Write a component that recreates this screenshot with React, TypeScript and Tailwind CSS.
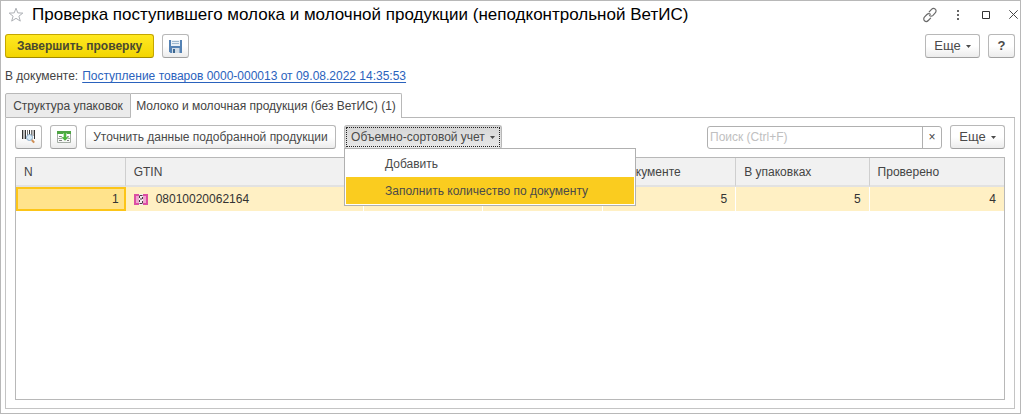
import React from 'react';

interface ToolButtonProps extends React.ButtonHTMLAttributes<HTMLButtonElement> {
  pressed?: boolean;
}

const ToolButton: React.FC<ToolButtonProps> = ({ className = '', pressed = false, children, ...rest }) => (
  <button
    type="button"
    className={`flex h-6 shrink-0 items-center justify-center rounded-[3px] border border-[#b8b8b8] border-b-[#a0a0a0] whitespace-nowrap text-[#4a4a4a] ${
      pressed
        ? 'bg-linear-to-b from-[#d6d6d6] to-[#e8e8e8] outline-1 outline-dotted -outline-offset-3 outline-[#222]'
        : 'bg-linear-to-b from-white from-50% to-[#ececec]'
    } ${className}`}
    {...rest}
  >
    {children}
  </button>
);

const Caret: React.FC = () => (
  <svg className="mt-px ml-[5px] h-[3px] w-[5px]" viewBox="0 0 5 3" fill="#4a4a4a" aria-hidden="true">
    <path d="M0 0h5L2.500 3z" />
  </svg>
);

const StarIcon: React.FC = () => (
  <svg className="h-4 w-4" viewBox="0 0 16 16" fill="none" stroke="#adb0b5" aria-hidden="true">
    <path d="M8 1.200l1.800 4.700 5 .2-3.900 3.100 1.400 4.900L8 11.300l-4.300 2.800 1.400-4.900L1.200 6.100l5-.2z" />
  </svg>
);

const LinkIcon: React.FC = () => (
  <svg className="h-4 w-4" viewBox="0 0 16 16" fill="none" stroke="#6a6a6a" strokeWidth="1.200" strokeLinecap="round" aria-hidden="true">
    <path d="M7.200 4.800l2.300-2.500c1.100-1.100 2.800-1.100 3.800-.2s1 2.700-.1 3.800L11 8.300c-1 1-2.500 1.100-3.500.3" />
    <path d="M8.600 11.100l-2.300 2.400c-1.100 1.100-2.800 1.100-3.800.2s-1-2.700.1-3.800L4.900 7.500c1-1 2.500-1.100 3.500-.3" />
  </svg>
);

const DotsIcon: React.FC = () => (
  <svg className="h-3 w-3" viewBox="0 0 12 12" fill="#666" aria-hidden="true">
    <path d="M5 1h2v2H5zM5 5h2v2H5zM5 9h2v2H5z" />
  </svg>
);

const MaximizeIcon: React.FC = () => (
  <svg className="h-2 w-2" viewBox="0 0 8 8" fill="none" stroke="#333" aria-hidden="true">
    <path d="M.5.5h7v7h-7z" />
  </svg>
);

const CloseIcon: React.FC = () => (
  <svg className="h-[9px] w-[9px]" viewBox="0 0 9 9" fill="none" stroke="#444" aria-hidden="true">
    <path d="M.3.3l8.400 8.400M8.700.3L.3 8.700" />
  </svg>
);

const SaveIcon: React.FC = () => (
  <svg className="h-[13px] w-[13px]" viewBox="0 0 13 13" aria-hidden="true">
    <path d="M0 0h13v13H1.500L0 11.500z" fill="#5482b4" />
    <path d="M2 0h9v6H2z" fill="#e8f0f6" />
    <path d="M3 1.500h7M3 3.500h7" stroke="#9db8cf" />
    <path d="M3 8h7.500v5H3z" fill="#cfdbe6" />
    <path d="M4 9h2v4H4z" fill="#3c668f" />
  </svg>
);

const BarcodeIcon: React.FC = () => (
  <svg className="h-4 w-4" viewBox="0 0 16 16" fill="none" aria-hidden="true">
    <path d="M1.500 1v9M4.500 1v9M8.500 1v6M13.500 1v9" stroke="#333" />
    <path d="M3 1v9M6.500 1v9M10.500 1v6M12 1v6" stroke="#777" />
    <circle cx="8.500" cy="8.500" r="3" fill="#d9ebf7" stroke="#8aa9c6" />
    <path d="M10.800 11l2.400 2.700" stroke="#cf8f55" strokeWidth="2" />
  </svg>
);

const FillTableIcon: React.FC = () => (
  <svg className="h-4 w-4" viewBox="0 0 16 16" fill="none" aria-hidden="true">
    <path d="M1.500 4v9.500h13V4M1.500 9.500h13" stroke="#a3aca3" />
    <path d="M3 7.500h3M3 11.500h3M11 7.500h2M11 11.500h2" stroke="#7f7f7f" />
    <path d="M1 2h14v3H1z" fill="#4fa544" />
    <path d="M7.500 3.500h3v4.500h2.500l-4 4-4-4h2.500z" fill="#4db63f" stroke="#e4f4df" strokeWidth=".5" />
    <path d="M1 2h14v2H1z" fill="#4fa544" />
  </svg>
);

const ProductIcon: React.FC = () => (
  <svg className="h-[11px] w-[14px] shrink-0" viewBox="0 0 14 11" aria-hidden="true">
    <path d="M0 0h14v11H0z" fill="#dc4fa3" />
    <path d="M2 2h10v7H2z" fill="#f0a6d0" />
    <path d="M5 0h4v11H5z" fill="#f3edf0" />
    <path d="M5.500 1h3v1h-3zM5 2h1v2H5zM8 3h1v2H8zM6 4.500h2v1H6zM5 6h1v2H5zM8 7h1v2H8zM5.500 9h3v1h-3z" fill="#4c3945" />
  </svg>
);

const columns = [
  { title: 'N', width: 'w-[11.100%]' },
  { title: 'GTIN', width: 'w-[24.100%]' },
  { title: '', width: 'w-[12.100%]' },
  { title: '', width: 'w-[12.100%]' },
  { title: 'В документе', width: 'w-[13.500%]' },
  { title: 'В упаковках', width: 'w-[13.500%]' },
  { title: 'Проверено', width: 'w-[13.600%]' },
];

const cell = 'border-r border-white px-2 last:border-r-0';

const App: React.FC = () => {
  return (
    <div className="flex min-h-screen flex-col border border-[#b8b8b8] bg-white pr-[5px] pb-1 pl-1 font-['Liberation_Sans',Arial,sans-serif] text-[12px] text-[#444]">
      <header className="flex h-[27px] items-center justify-between">
        <div className="flex items-center gap-2 pl-[3px]">
          <button type="button" aria-label="В избранное">
            <StarIcon />
          </button>
          <h1 className="text-[17px] leading-5 text-black">
            Проверка поступившего молока и молочной продукции (неподконтрольной ВетИС)
          </h1>
        </div>
        <div className="-mr-[3px] flex items-center">
          <button type="button" aria-label="Получить ссылку" className="mr-[14px]"><LinkIcon /></button>
          <button type="button" aria-label="Меню" className="mr-[18px]"><DotsIcon /></button>
          <button type="button" aria-label="Развернуть" className="mr-[19px]"><MaximizeIcon /></button>
          <button type="button" aria-label="Закрыть"><CloseIcon /></button>
        </div>
      </header>

      <div className="mt-[6px] flex items-center justify-between">
        <div className="flex gap-2">
          <button
            type="button"
            className="h-6 w-[149px] rounded-[3px] border border-[#c4a600] border-b-[#a08a00] bg-linear-to-b from-[#ffe91f] to-[#f3d500] font-bold text-[#4a4a30]"
          >
            Завершить проверку
          </button>
          <ToolButton className="w-[27px]" aria-label="Записать"><SaveIcon /></ToolButton>
        </div>
        <div className="flex gap-2">
          <ToolButton className="w-[55px] text-[13px]">Еще <Caret /></ToolButton>
          <ToolButton className="w-[27px] text-[13px] font-bold" aria-label="Справка">?</ToolButton>
        </div>
      </div>

      <div className="mt-[10px] flex h-4 items-center gap-1 leading-4">
        <span>В документе:</span>
        <a href="#document" className="text-[#2a62bd] underline underline-offset-2">
          Поступление товаров 0000-000013 от 09.08.2022 14:35:53
        </a>
      </div>

      <div role="tablist" className="mt-[9px] flex h-[25px]">
        <button type="button" role="tab" aria-selected="false" className="w-[126px] rounded-tl-xs border border-[#b8b8b8] bg-[#ebebeb]">
          Структура упаковок
        </button>
        <button type="button" role="tab" aria-selected="true" className="w-[271px] rounded-tr-xs border-t border-r border-[#b8b8b8] bg-white">
          Молоко и молочная продукция (без ВетИС) (1)
        </button>
        <span className="flex-1 border-b border-[#b8b8b8]" />
      </div>

      <main className="flex flex-1 flex-col border-x border-b border-[#c4c4c4] px-[9px] pt-[7px] pb-2">
        <div className="flex items-center gap-2">
          <ToolButton className="w-[27px]" aria-label="Поиск по штрихкоду"><BarcodeIcon /></ToolButton>
          <ToolButton className="w-[27px]" aria-label="Заполнить таблицу"><FillTableIcon /></ToolButton>
          <ToolButton className="w-[251px]">Уточнить данные подобранной продукции</ToolButton>
          <div className="relative">
            <ToolButton pressed className="w-[158px]" aria-haspopup="menu" aria-expanded="true">
              Объемно-сортовой учет <Caret />
            </ToolButton>
            <div role="menu" className="absolute top-[23px] left-0 z-10 w-[292px] border border-[#b0b0b0] bg-white p-px text-[#4a4a4a]">
              <button type="button" role="menuitem" className="block h-[27px] w-full pl-[39px] text-left">
                Добавить
              </button>
              <button type="button" role="menuitem" className="block h-[27px] w-full bg-[#facc1f] pl-[39px] text-left">
                Заполнить количество по документу
              </button>
            </div>
          </div>
          <div className="ml-auto flex h-[23px] w-[235px] rounded-[3px] border border-[#b0b0b0]">
            <input
              type="text"
              aria-label="Поиск"
              placeholder="Поиск (Ctrl+F)"
              className="min-w-0 flex-1 px-[2px] outline-none placeholder:text-[#c0c0c0]"
            />
            <button type="button" aria-label="Очистить" className="w-[19px] border-l border-[#b0b0b0]">×</button>
          </div>
          <ToolButton className="w-[55px] text-[13px]">Еще <Caret /></ToolButton>
        </div>

        <div className="mt-2 flex-1 border border-[#b8b8b8]">
          <table className="w-full table-fixed border-separate border-spacing-0">
            <thead>
              <tr className="h-[29px] bg-[#f1f1f1] text-left">
                {columns.map((column, index) => (
                  <th key={index} className={`${column.width} border-r border-b-2 border-r-[#cfcfcf] border-b-[#e2e2e2] px-2 font-normal last:border-r-0`}>
                    {column.title}
                  </th>
                ))}
              </tr>
            </thead>
            <tbody>
              <tr className="h-6 bg-[#fff0c4] text-right text-[#333]">
                <td className="border-2 border-[#fcc518] bg-[#ffe38c] px-[5px]">1</td>
                <td className={cell}>
                  <div className="flex items-center gap-2">
                    <ProductIcon />
                    08010020062164
                  </div>
                </td>
                <td className={cell} />
                <td className={cell} />
                <td className={cell}>5</td>
                <td className={cell}>5</td>
                <td className={cell}>4</td>
              </tr>
            </tbody>
          </table>
        </div>
      </main>
    </div>
  );
};

export default App;
